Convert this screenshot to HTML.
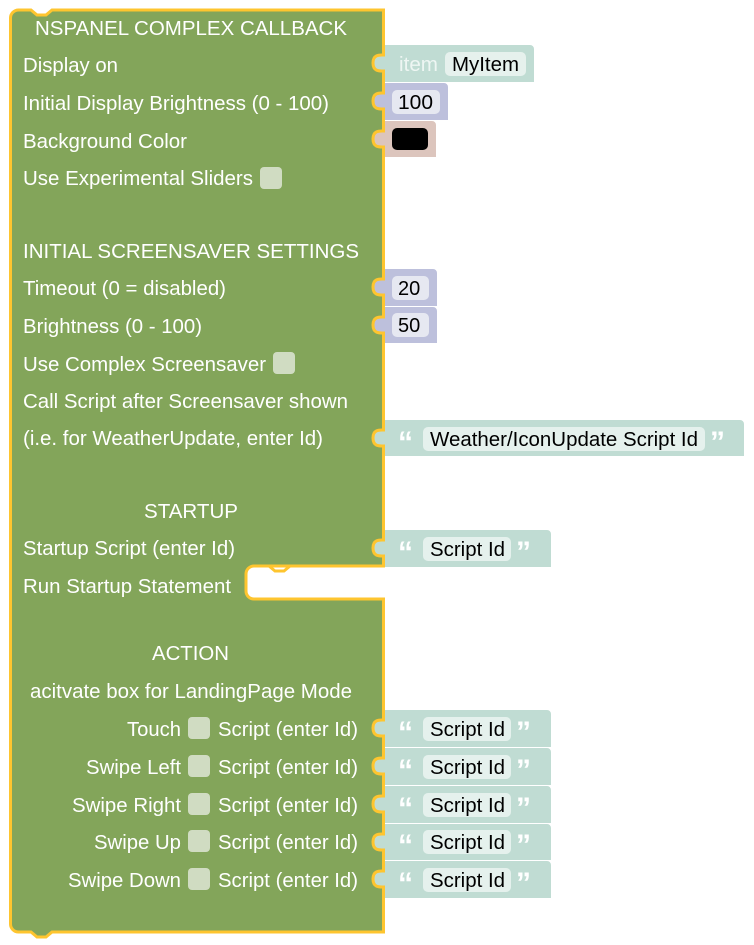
<!DOCTYPE html>
<html><head><meta charset="utf-8"><style>
html,body{margin:0;padding:0;background:#fff;width:754px;height:945px;overflow:hidden}
svg text{font-family:"Liberation Sans",Arial,sans-serif;font-size:20px}
.w{fill:#fff}.b{fill:#000}
.q{fill:#fff;font-size:30px !important;font-weight:bold}
</style></head><body>
<svg width="754" height="945" viewBox="0 0 754 945" xmlns="http://www.w3.org/2000/svg">
<path d="M10.5,18 a8,8 0 0 1 8,-8 H31 l6,5 h9 l6,-5 H383.5 V566 H254 a8,8 0 0 0 -8,8 v17 a8,8 0 0 0 8,8 H383.5 V932 H52 l-6,5 h-9 l-6,-5 H18.5 a8,8 0 0 1 -8,-8 Z" fill="#83a55a" stroke="#fec52f" stroke-width="3"/>
<path d="M383.5,566 H290 l-6,5 h-9 l-6,-5 H254" fill="none" stroke="#fec52f" stroke-width="3"/>

<!-- item -->
<path d="M385,45 H530 a4,4 0 0 1 4,4 V82 H385 V71 c-5,0 -12,1 -12,-8 c0,-9 7,-8 12,-8 Z" fill="#c0dcd3"/>
<path d="M385,55 c-5,0 -12,-1 -12,8 c0,9 7,8 12,8" fill="none" stroke="#fec52f" stroke-width="3"/>
<text x="399" y="71" fill="#eef6f3" textLength="39" lengthAdjust="spacingAndGlyphs">item</text>
<rect x="445" y="52" width="81" height="24" rx="5" fill="#e6f1ed"/>
<text x="452" y="71" class="b" textLength="67" lengthAdjust="spacingAndGlyphs">MyItem</text>
<!-- 100 -->
<path d="M385,83 H444 a4,4 0 0 1 4,4 V120 H385 V109 c-5,0 -12,1 -12,-8 c0,-9 7,-8 12,-8 Z" fill="#bdc0dc"/>
<path d="M385,93 c-5,0 -12,-1 -12,8 c0,9 7,8 12,8" fill="none" stroke="#fec52f" stroke-width="3"/>
<rect x="392" y="90" width="48" height="24" rx="5" fill="#e6e8f1"/>
<text x="398" y="109" class="b" textLength="35" lengthAdjust="spacingAndGlyphs">100</text>
<!-- color -->
<path d="M385,121 H432 a4,4 0 0 1 4,4 V157 H385 V147 c-5,0 -12,1 -12,-8 c0,-9 7,-8 12,-8 Z" fill="#dcc5bd"/>
<path d="M385,131 c-5,0 -12,-1 -12,8 c0,9 7,8 12,8" fill="none" stroke="#fec52f" stroke-width="3"/>
<rect x="392" y="128" width="36" height="22" rx="5" fill="#000"/>
<!-- 20 -->
<path d="M385,269 H433 a4,4 0 0 1 4,4 V306 H385 V295 c-5,0 -12,1 -12,-8 c0,-9 7,-8 12,-8 Z" fill="#bdc0dc"/>
<path d="M385,279 c-5,0 -12,-1 -12,8 c0,9 7,8 12,8" fill="none" stroke="#fec52f" stroke-width="3"/>
<rect x="392" y="276" width="37" height="24" rx="5" fill="#e6e8f1"/>
<text x="398" y="295" class="b">20</text>
<!-- 50 -->
<path d="M385,307 H433 a4,4 0 0 1 4,4 V343 H385 V333 c-5,0 -12,1 -12,-8 c0,-9 7,-8 12,-8 Z" fill="#bdc0dc"/>
<path d="M385,317 c-5,0 -12,-1 -12,8 c0,9 7,8 12,8" fill="none" stroke="#fec52f" stroke-width="3"/>
<rect x="392" y="313" width="37" height="24" rx="5" fill="#e6e8f1"/>
<text x="398" y="332" class="b">50</text>
<!-- weather -->
<path d="M385,420 H740 a4,4 0 0 1 4,4 V456 H385 V446 c-5,0 -12,1 -12,-8 c0,-9 7,-8 12,-8 Z" fill="#c0dcd3"/>
<path d="M385,430 c-5,0 -12,-1 -12,8 c0,9 7,8 12,8" fill="none" stroke="#fec52f" stroke-width="3"/>
<text x="398" y="452" class="q">“</text>
<rect x="423" y="427" width="282" height="24" rx="5" fill="#e5f1ed"/>
<text x="430" y="446" class="b" textLength="268" lengthAdjust="spacingAndGlyphs">Weather/IconUpdate Script Id</text>
<text x="710" y="452" class="q">”</text>

<!-- checkboxes -->
<rect x="260" y="167" width="22" height="22" rx="4" fill="#d0dcc2"/>
<rect x="273" y="352" width="22" height="22" rx="4" fill="#d0dcc2"/>
<rect x="188" y="717" width="22" height="22" rx="4" fill="#d0dcc2"/>
<rect x="188" y="755" width="22" height="22" rx="4" fill="#d0dcc2"/>
<rect x="188" y="793" width="22" height="22" rx="4" fill="#d0dcc2"/>
<rect x="188" y="830" width="22" height="22" rx="4" fill="#d0dcc2"/>
<rect x="188" y="868" width="22" height="22" rx="4" fill="#d0dcc2"/>

<g class="w">
<text x="35" y="35" textLength="312" lengthAdjust="spacingAndGlyphs">NSPANEL COMPLEX CALLBACK</text>
<text x="23" y="72" textLength="95" lengthAdjust="spacingAndGlyphs">Display on</text>
<text x="23" y="110" textLength="306" lengthAdjust="spacingAndGlyphs">Initial Display Brightness (0 - 100)</text>
<text x="23" y="148" textLength="164" lengthAdjust="spacingAndGlyphs">Background Color</text>
<text x="23" y="185" textLength="230" lengthAdjust="spacingAndGlyphs">Use Experimental Sliders</text>
<text x="23" y="258" textLength="336" lengthAdjust="spacingAndGlyphs">INITIAL SCREENSAVER SETTINGS</text>
<text x="23" y="295" textLength="203" lengthAdjust="spacingAndGlyphs">Timeout (0 = disabled)</text>
<text x="23" y="333" textLength="179" lengthAdjust="spacingAndGlyphs">Brightness (0 - 100)</text>
<text x="23" y="371" textLength="243" lengthAdjust="spacingAndGlyphs">Use Complex Screensaver</text>
<text x="23" y="408" textLength="325" lengthAdjust="spacingAndGlyphs">Call Script after Screensaver shown</text>
<text x="23" y="445" textLength="300" lengthAdjust="spacingAndGlyphs">(i.e. for WeatherUpdate, enter Id)</text>
<text x="144" y="518" textLength="94" lengthAdjust="spacingAndGlyphs">STARTUP</text>
<text x="23" y="555" textLength="212" lengthAdjust="spacingAndGlyphs">Startup Script (enter Id)</text>
<text x="23" y="593" textLength="208" lengthAdjust="spacingAndGlyphs">Run Startup Statement</text>
<text x="152" y="660" textLength="77" lengthAdjust="spacingAndGlyphs">ACTION</text>
<text x="30" y="698" textLength="322" lengthAdjust="spacingAndGlyphs">acitvate box for LandingPage Mode</text>
<text x="127" y="736" textLength="54" lengthAdjust="spacingAndGlyphs">Touch</text>
<text x="86" y="774" textLength="95" lengthAdjust="spacingAndGlyphs">Swipe Left</text>
<text x="72" y="812" textLength="109" lengthAdjust="spacingAndGlyphs">Swipe Right</text>
<text x="94" y="849" textLength="87" lengthAdjust="spacingAndGlyphs">Swipe Up</text>
<text x="68" y="887" textLength="113" lengthAdjust="spacingAndGlyphs">Swipe Down</text>
<text x="218" y="736" textLength="140" lengthAdjust="spacingAndGlyphs">Script (enter Id)</text>
<text x="218" y="774" textLength="140" lengthAdjust="spacingAndGlyphs">Script (enter Id)</text>
<text x="218" y="812" textLength="140" lengthAdjust="spacingAndGlyphs">Script (enter Id)</text>
<text x="218" y="849" textLength="140" lengthAdjust="spacingAndGlyphs">Script (enter Id)</text>
<text x="218" y="887" textLength="140" lengthAdjust="spacingAndGlyphs">Script (enter Id)</text>
</g>

<g>
<path d="M385,530 H547 a4,4 0 0 1 4,4 V567 H385 V556 c-5,0 -12,1 -12,-8 c0,-9 7,-8 12,-8 Z" fill="#c0dcd3"/>
<path d="M385,540 c-5,0 -12,-1 -12,8 c0,9 7,8 12,8" fill="none" stroke="#fec52f" stroke-width="3"/>
<text x="398" y="562" class="q">“</text>
<rect x="423" y="537" width="88" height="24" rx="5" fill="#e5f1ed"/>
<text x="430" y="556" class="b" textLength="75" lengthAdjust="spacingAndGlyphs">Script Id</text>
<text x="516" y="562" class="q">”</text>
</g>
<g>
<path d="M385,710 H547 a4,4 0 0 1 4,4 V747 H385 V736 c-5,0 -12,1 -12,-8 c0,-9 7,-8 12,-8 Z" fill="#c0dcd3"/>
<path d="M385,720 c-5,0 -12,-1 -12,8 c0,9 7,8 12,8" fill="none" stroke="#fec52f" stroke-width="3"/>
<text x="398" y="742" class="q">“</text>
<rect x="423" y="717" width="88" height="24" rx="5" fill="#e5f1ed"/>
<text x="430" y="736" class="b" textLength="75" lengthAdjust="spacingAndGlyphs">Script Id</text>
<text x="516" y="742" class="q">”</text>
</g>
<g>
<path d="M385,748 H547 a4,4 0 0 1 4,4 V785 H385 V774 c-5,0 -12,1 -12,-8 c0,-9 7,-8 12,-8 Z" fill="#c0dcd3"/>
<path d="M385,758 c-5,0 -12,-1 -12,8 c0,9 7,8 12,8" fill="none" stroke="#fec52f" stroke-width="3"/>
<text x="398" y="780" class="q">“</text>
<rect x="423" y="755" width="88" height="24" rx="5" fill="#e5f1ed"/>
<text x="430" y="774" class="b" textLength="75" lengthAdjust="spacingAndGlyphs">Script Id</text>
<text x="516" y="780" class="q">”</text>
</g>
<g>
<path d="M385,786 H547 a4,4 0 0 1 4,4 V823 H385 V812 c-5,0 -12,1 -12,-8 c0,-9 7,-8 12,-8 Z" fill="#c0dcd3"/>
<path d="M385,796 c-5,0 -12,-1 -12,8 c0,9 7,8 12,8" fill="none" stroke="#fec52f" stroke-width="3"/>
<text x="398" y="818" class="q">“</text>
<rect x="423" y="793" width="88" height="24" rx="5" fill="#e5f1ed"/>
<text x="430" y="812" class="b" textLength="75" lengthAdjust="spacingAndGlyphs">Script Id</text>
<text x="516" y="818" class="q">”</text>
</g>
<g>
<path d="M385,824 H547 a4,4 0 0 1 4,4 V860 H385 V850 c-5,0 -12,1 -12,-8 c0,-9 7,-8 12,-8 Z" fill="#c0dcd3"/>
<path d="M385,834 c-5,0 -12,-1 -12,8 c0,9 7,8 12,8" fill="none" stroke="#fec52f" stroke-width="3"/>
<text x="398" y="855" class="q">“</text>
<rect x="423" y="830" width="88" height="24" rx="5" fill="#e5f1ed"/>
<text x="430" y="849" class="b" textLength="75" lengthAdjust="spacingAndGlyphs">Script Id</text>
<text x="516" y="855" class="q">”</text>
</g>
<g>
<path d="M385,861 H547 a4,4 0 0 1 4,4 V898 H385 V887 c-5,0 -12,1 -12,-8 c0,-9 7,-8 12,-8 Z" fill="#c0dcd3"/>
<path d="M385,871 c-5,0 -12,-1 -12,8 c0,9 7,8 12,8" fill="none" stroke="#fec52f" stroke-width="3"/>
<text x="398" y="893" class="q">“</text>
<rect x="423" y="868" width="88" height="24" rx="5" fill="#e5f1ed"/>
<text x="430" y="887" class="b" textLength="75" lengthAdjust="spacingAndGlyphs">Script Id</text>
<text x="516" y="893" class="q">”</text>
</g>
</svg>
</body></html>
